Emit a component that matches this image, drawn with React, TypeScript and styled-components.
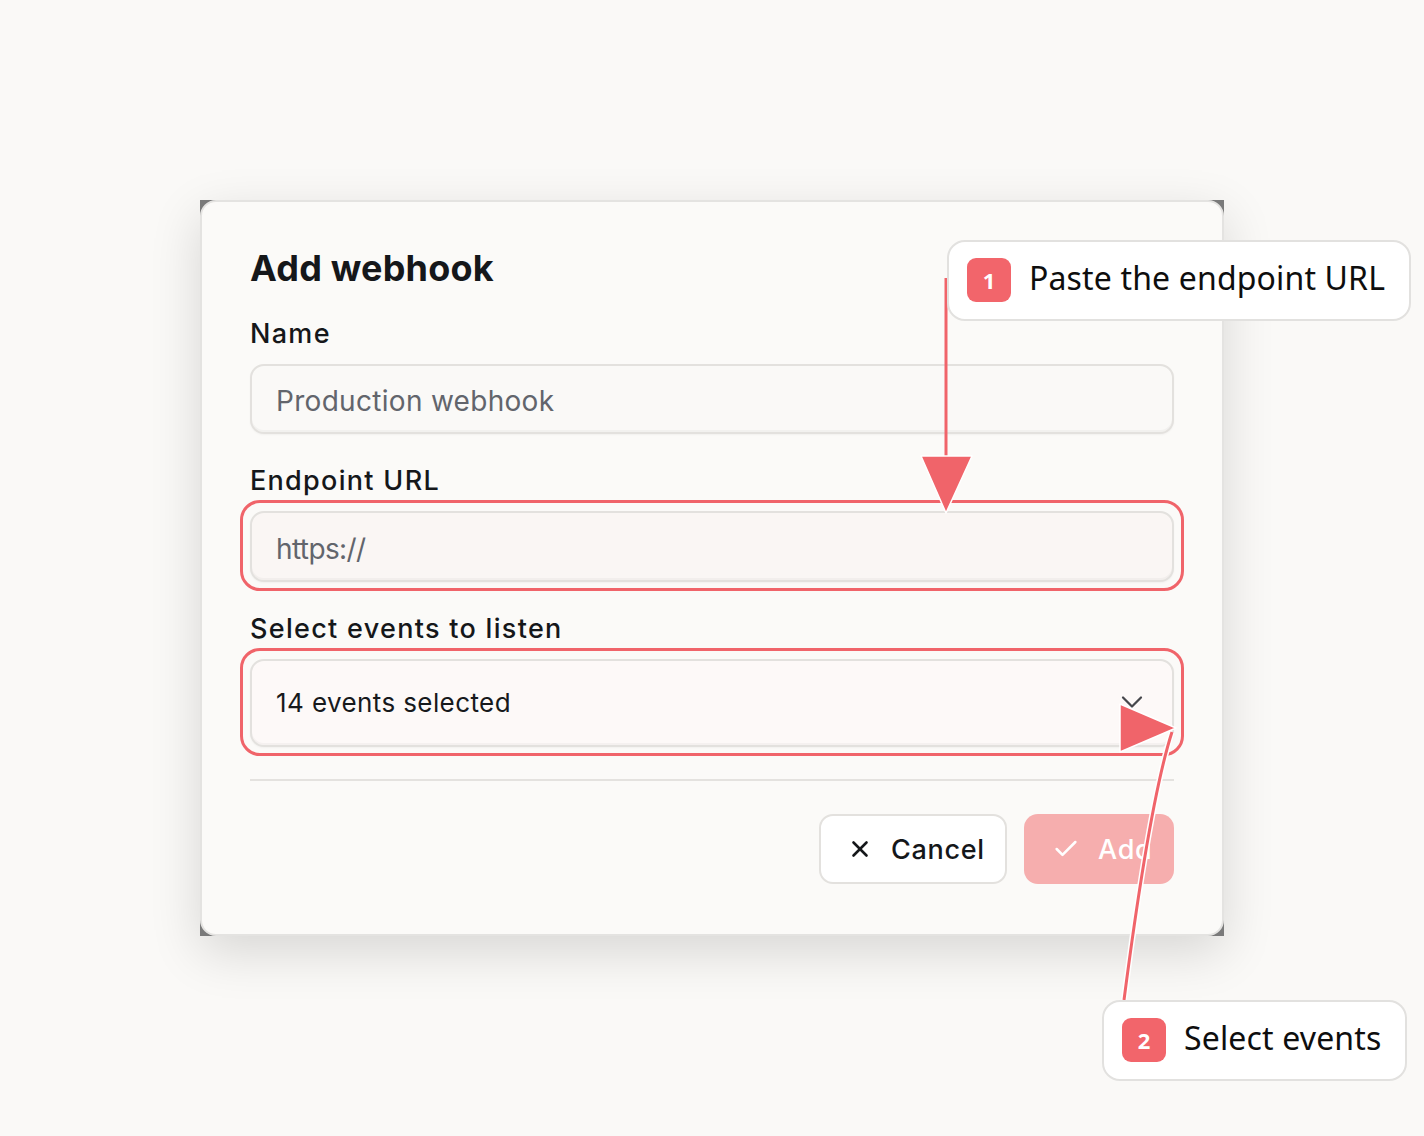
import React from "react";
import styled, { createGlobalStyle } from "styled-components";
import { X, Check, ChevronDown } from "lucide-react";

const Global = createGlobalStyle`
  html, body { margin: 0; padding: 0; }
  body {
    background: #faf9f7;
    font-family: Inter, "Noto Sans", sans-serif;
    color: #15171a;
  }
`;

const Page = styled.div`
  position: relative;
  width: 1424px;
  height: 1136px;
  overflow: hidden;
  background: #faf9f7;
  padding: 200px 0 0 200px;
  box-sizing: border-box;
`;

const Frame = styled.div`
  width: 1024px;
  background: #7a7a7a;
  box-shadow: 0 16px 48px rgba(0, 0, 0, 0.14);
`;

const Dialog = styled.div`
  box-sizing: border-box;
  background: #fbfaf8;
  border: 2px solid #e4e3e1;
  border-radius: 16px;
  padding: 45px 48px 50px;
  display: flex;
  flex-direction: column;
`;

const Title = styled.h1`
  margin: 0;
  font-size: 36px;
  line-height: 42px;
  font-weight: 700;
  letter-spacing: 0.2px;
`;

const Fields = styled.div`
  display: flex;
  flex-direction: column;
  gap: 31px;
  margin-top: 29px;
`;

const Field = styled.div`
  display: flex;
  flex-direction: column;
  gap: 14px;
`;

const Label = styled.label`
  font-size: 27px;
  line-height: 32px;
  font-weight: 500;
  letter-spacing: 1.3px;
`;

const Control = styled.div`
  position: relative;
`;

const Input = styled.div<{ $bg?: string; $h?: number; $dark?: boolean; $tight?: boolean }>`
  box-sizing: border-box;
  height: ${(p) => p.$h ?? 70}px;
  border: 2px solid #e3e1de;
  border-radius: 14px;
  background: ${(p) => p.$bg ?? "#faf9f7"};
  box-shadow: inset 0 -2px 0 rgba(0, 0, 0, 0.03), 0 1px 2px rgba(0, 0, 0, 0.04);
  display: flex;
  align-items: center;
  justify-content: space-between;
  padding: ${(p) => (p.$dark ? "0 22px 2px 24px" : "4px 22px 0 24px")};
  font-size: ${(p) => (p.$dark ? 26 : 28)}px;
  letter-spacing: ${(p) => (p.$tight ? -0.6 : p.$dark ? 0.4 : 0.3)}px;
  color: ${(p) => (p.$dark ? "#17191c" : "#62656c")};
`;

const Ring = styled.div`
  position: absolute;
  top: -11px;
  bottom: -9px;
  left: -10px;
  right: -10px;
  border: 3px solid #f0646a;
  border-radius: 20px;
  pointer-events: none;
`;

const Divider = styled.div`
  height: 2px;
  background: #e4e2df;
  margin-top: 32px;
`;

const Actions = styled.div`
  display: flex;
  justify-content: flex-end;
  gap: 17px;
  margin-top: 33px;
`;

const Button = styled.button<{ $primary?: boolean }>`
  box-sizing: border-box;
  height: 70px;
  border-radius: 14px;
  display: flex;
  align-items: center;
  gap: 18px;
  font-family: Inter, sans-serif;
  font-size: 27px;
  font-weight: 500;
  letter-spacing: 0.7px;
  cursor: pointer;
  ${(p) =>
    p.$primary
      ? `
    width: 150px;
    padding: 0 0 0 28px;
    background: #f6aeae;
    border: none;
    color: #ffffff;
  `
      : `
    width: 188px;
    padding: 0 0 0 26px;
    background: #ffffff;
    border: 2px solid #e3e1de;
    color: #15171a;
  `}
`;

const Callout = styled.div<{ $x: number; $y: number }>`
  position: absolute;
  left: ${(p) => p.$x}px;
  top: ${(p) => p.$y}px;
  box-sizing: border-box;
  height: 81px;
  background: #ffffff;
  border: 2px solid #e2e1df;
  border-radius: 18px;
  display: flex;
  align-items: center;
  gap: 18px;
  padding: 0 24px 0 18px;
  font-family: "Noto Sans", "Open Sans", sans-serif;
  font-size: 32px;
  letter-spacing: 0.15px;
  color: #0e0e0e;
  white-space: nowrap;
`;

const CalloutText = styled.span`
  line-height: 40px;
  padding-bottom: 5px;
`;

const Badge = styled.span`
  width: 44px;
  height: 44px;
  border-radius: 9px;
  background: #f2656b;
  color: #ffffff;
  font-family: "Noto Sans", sans-serif;
  font-size: 22px;
  font-weight: 700;
  display: flex;
  align-items: center;
  justify-content: center;
  flex: none;
  margin-bottom: 2px;
`;

const Overlay = styled.svg`
  position: absolute;
  left: 0;
  top: 0;
  pointer-events: none;
`;

export default function App() {
  return (
    <>
      <Global />
      <Page>
        <Frame>
          <Dialog>
            <Title>Add webhook</Title>
            <Fields>
              <Field>
                <Label>Name</Label>
                <Control>
                  <Input>Production webhook</Input>
                </Control>
              </Field>
              <Field>
                <Label>Endpoint URL</Label>
                <Control>
                  <Input $h={71} $bg="#faf6f4" $tight>
                    https://
                  </Input>
                  <Ring />
                </Control>
              </Field>
              <Field>
                <Label>Select events to listen</Label>
                <Control>
                  <Input $h={88} $bg="#fdf9f8" $dark>
                    <span>14 events selected</span>
                    <ChevronDown size={36} color="#46474c" strokeWidth={1.5} />
                  </Input>
                  <Ring />
                </Control>
              </Field>
            </Fields>
            <Divider />
            <Actions>
              <Button>
                <X size={26} strokeWidth={2.4} />
                Cancel
              </Button>
              <Button $primary>
                <Check size={28} strokeWidth={2.2} />
                Add
              </Button>
            </Actions>
          </Dialog>
        </Frame>

        <Overlay width={1424} height={1136} viewBox="0 0 1424 1136">
          <line x1={946} y1={278} x2={946} y2={480} stroke="#f0646a" strokeWidth={3} />
          <polygon
            points="921,456 972,456 946,513"
            fill="#f0646a"
            stroke="#ffffff"
            strokeWidth={1.5}
            strokeLinejoin="round"
          />
          <path
            d="M1124 1000 Q1150 800 1172 732"
            fill="none"
            stroke="#ffffff"
            strokeWidth={6}
          />
          <path
            d="M1124 1000 Q1150 800 1172 732"
            fill="none"
            stroke="#f0646a"
            strokeWidth={3}
          />
          <polygon
            points="1120,704 1120,752 1176,728"
            fill="#f0646a"
            stroke="#ffffff"
            strokeWidth={1.5}
            strokeLinejoin="round"
          />
        </Overlay>

        <Callout $x={947} $y={240}>
          <Badge>1</Badge>
          <CalloutText>Paste the endpoint URL</CalloutText>
        </Callout>
        <Callout $x={1102} $y={1000}>
          <Badge>2</Badge>
          <CalloutText>Select events</CalloutText>
        </Callout>
      </Page>
    </>
  );
}
